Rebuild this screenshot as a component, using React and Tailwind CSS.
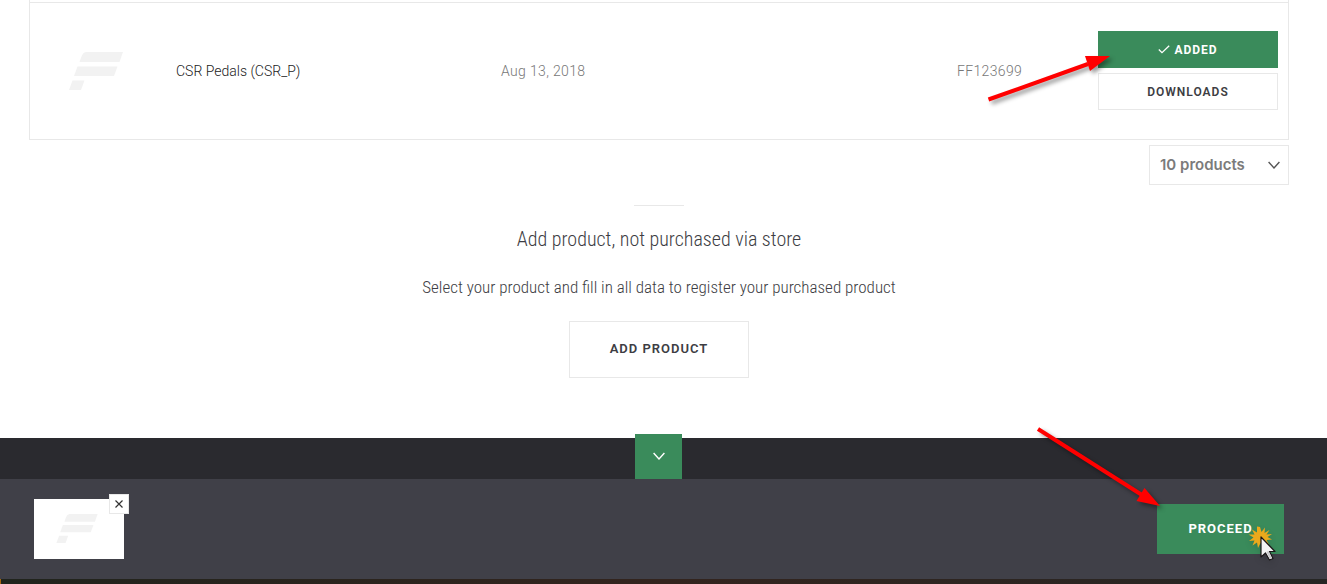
import React from "react";

const products = [
  { id: "FF123699", name: "CSR Pedals (CSR_P)", date: "Aug 13, 2018" },
];

const BrandMark = ({ className }) => (
  <svg viewBox="0 0 54 38" className={className} fill="#f2f2f2" aria-hidden="true">
    <path d="M17 0H54L50.500 10H10.500L12.500 4.500Q14 0.300 17 0Z" />
    <path d="M8.500 14.500H48.500L45 24H5Z" />
    <path d="M3.500 28.500H15.500L12 38H0Z" />
  </svg>
);

const Chevron = ({ className }) => (
  <svg viewBox="0 0 12 8" className={className} fill="none" stroke="currentColor" strokeWidth="1.4" aria-hidden="true">
    <path d="M0.600 1L6 7L11.400 1" />
  </svg>
);

const Check = () => (
  <svg viewBox="0 0 12 9" className="w-3 h-[9px]" fill="none" stroke="currentColor" strokeWidth="1.300" aria-hidden="true">
    <path d="M0.800 4.500L4 7.700L11.200 0.800" />
  </svg>
);

const Pointer = () => (
  <svg
    viewBox="0 0 32 40"
    className="absolute right-1.5 top-5 w-8 h-10 pointer-events-none drop-shadow-md"
    aria-hidden="true"
  >
    <path
      fill="#eba91c"
      d="M14 3L15.500 8L19 3.500L18.500 9L23.500 6L20.500 10.500L26 10L21.500 13L26 15.500L20.500 16L23 20.500L18 18L17.500 23L14.500 19L12 24L11 18.500L6.500 21.500L8.500 16.500L3 17L7.500 13.500L2.500 10.500L8.500 10.500L6 5.500L11 8.500L11 2.500Z"
    />
    <path
      fill="#f4f4f4"
      stroke="#1b1718"
      strokeWidth="1.200"
      strokeLinejoin="round"
      d="M15 13V33L19.500 29L23.500 36L27 34.500L23.500 27.500H29Z"
    />
    <path fill="#c9c9cb" d="M20.500 28L23.800 35L25.800 34L22.500 27Z" />
  </svg>
);

const condensed = "font-['Roboto_Condensed','Liberation_Sans_Narrow','Roboto',sans-serif]";

const ProductRow = ({ product }) => (
  <tr>
    <td className="h-[136px] border-t border-[#e8e8e8] pr-1">
      <BrandMark className="w-[54px] h-[38px] mx-auto" />
    </td>
    <td className="border-t border-[#e8e8e8] px-2.5 text-[#222222]">{product.name}</td>
    <td className="border-t border-[#e8e8e8] px-2.5 tracking-wide text-[#777777]">{product.date}</td>
    <td className="border-t border-[#e8e8e8] px-2.5 tracking-wide text-[#777777]">{product.id}</td>
    <td className="border-t border-[#e8e8e8] px-2.5">
      <div className="flex flex-col gap-[5px] text-xs font-bold tracking-[1px]">
        <button className="h-[37px] bg-[#3a8b5b] text-white flex items-center justify-center gap-1">
          <Check />
          ADDED
        </button>
        <button className="h-[37px] bg-white border border-[#e8e8e8] text-[#3d3d43] font-semibold">
          DOWNLOADS
        </button>
      </div>
    </td>
  </tr>
);

const App = () => {
  return (
    <div className="relative bg-white overflow-hidden font-['Roboto',sans-serif]">
      <main className="pl-[29px] pr-[38px] pb-[60px]">
        <div className="border-x border-b border-[#e8e8e8] pt-0.5">
          <table className="w-full table-fixed text-sm font-light text-left">
            <colgroup>
              <col className="w-[136px]" />
              <col className="w-[325px]" />
              <col />
              <col className="w-[141px]" />
              <col className="w-[200px]" />
            </colgroup>
            <tbody>
              {products.map((product) => (
                <ProductRow key={product.id} product={product} />
              ))}
            </tbody>
          </table>
        </div>

        <div className="flex justify-end mt-[5px]">
          <div className="relative">
            <select
              aria-label="Products per page"
              className="appearance-none w-[140px] h-10 pl-2.5 pt-0.5 bg-white border border-[#e8e8e8] text-[#7b7b7b] font-['Inter',sans-serif] text-[15px] font-semibold"
            >
              <option>10 products</option>
            </select>
            <Chevron className="absolute right-[9px] top-4 w-3 h-2 text-[#555555] pointer-events-none" />
          </div>
        </div>

        <section className="flex flex-col items-center mt-5 text-center text-[#3d3d43]">
          <div className="w-[50px] h-px bg-[#e8e8e8]" />
          <h2 className={`mt-[17px] text-[20px] leading-8 font-light ${condensed}`}>
            Add product, not purchased via store
          </h2>
          <p className={`mt-[18px] text-[17px] leading-7 font-light ${condensed}`}>
            Select your product and fill in all data to register your purchased product
          </p>
          <button className="mt-5 h-[57px] px-10 border border-[#e8e8e8] text-[13px] font-semibold tracking-[1px]">
            ADD PRODUCT
          </button>
        </section>
      </main>

      <footer>
        <div className="h-[41px] bg-[#2a2a2f] pr-2.5 flex items-end justify-center">
          <button
            aria-label="Collapse selection"
            className="w-[47px] h-[45px] shrink-0 bg-[#3a8b5b] text-white flex items-center justify-center"
          >
            <Chevron className="w-3 h-2" />
          </button>
        </div>
        <div className="h-[100px] bg-[#404048] pl-[34px] pr-[43px] flex items-center justify-between">
          <div className="relative w-[90px] h-[60px] pr-1 bg-white flex items-center justify-center">
            <BrandMark className="w-[42px] h-[29px]" />
            <button
              aria-label="Remove product"
              className="absolute -top-[5px] -right-[5px] w-5 h-5 bg-white border border-[#e8e8e8] text-[#333333] flex items-center justify-center"
            >
              <svg viewBox="0 0 8 8" className="w-2 h-2" fill="none" stroke="currentColor" strokeWidth="1.200" aria-hidden="true">
                <path d="M0.500 0.500L7.500 7.500M7.500 0.500L0.500 7.500" />
              </svg>
            </button>
          </div>
          <div className="relative">
            <button className="w-[127px] h-[50px] bg-[#3a8b5b] text-white text-[13px] font-bold tracking-[1px]">
              PROCEED
            </button>
            <Pointer />
          </div>
        </div>
        <div className="h-[5px] border-l border-[#a8650f] bg-linear-to-r from-[#20241d] via-[#33241e] to-[#262624]" />
      </footer>

      <svg
        viewBox="0 0 130 60"
        className="absolute top-[48px] right-[213px] w-[130px] h-[60px] pointer-events-none drop-shadow-[3px_3px_2px_rgba(0,0,0,0.4)]"
        fill="#ff0000"
        aria-hidden="true"
      >
        <path d="M4.500 51.500L104 16" stroke="#ff0000" strokeWidth="4" />
        <path d="M126 8L101 8L106 23Z" />
      </svg>
      <svg
        viewBox="0 0 134 90"
        className="absolute top-[422px] right-[161px] w-[134px] h-[90px] pointer-events-none drop-shadow-[3px_3px_2px_rgba(0,0,0,0.4)]"
        fill="#ff0000"
        aria-hidden="true"
      >
        <path d="M6 7L110 73" stroke="#ff0000" strokeWidth="4" />
        <path d="M128 84L112.500 66L104.500 79Z" />
      </svg>
    </div>
  );
};

export default App;
